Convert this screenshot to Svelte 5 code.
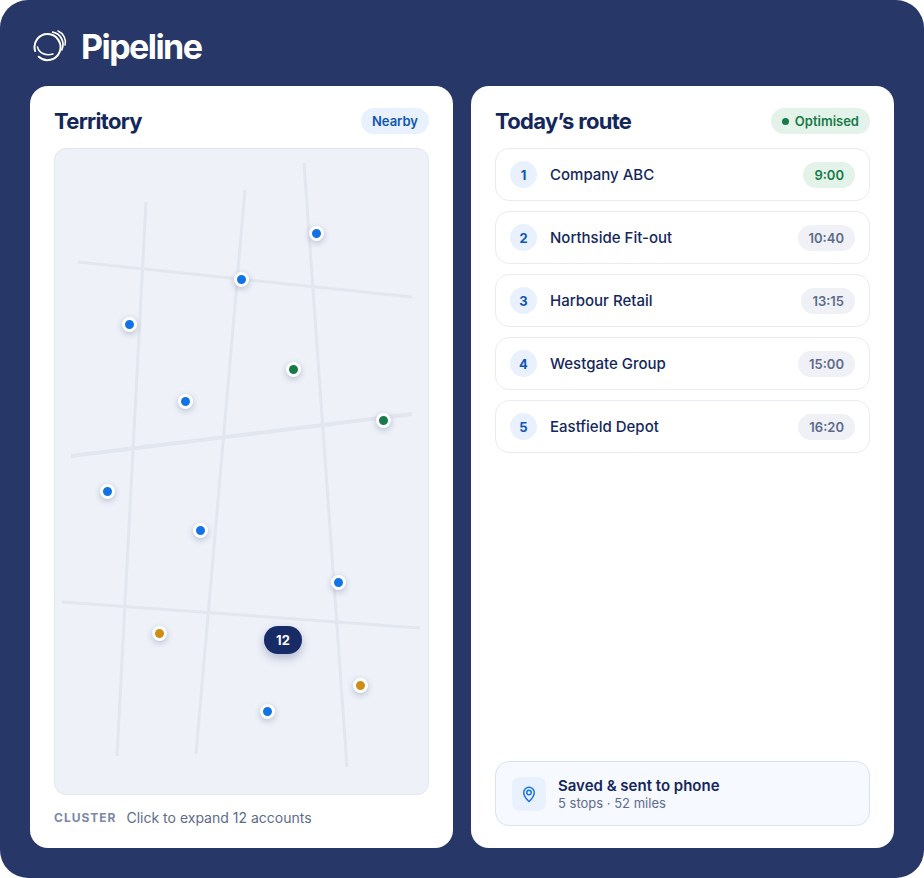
<script>
  const roads = [
    [146, 202, 117, 756, 3], [245, 190, 196, 754, 3], [304, 163, 347, 767, 3],
    [78, 262, 412, 297, 3], [71, 456, 412, 414, 4], [62, 602, 420, 628, 3]
  ];
  const pins = [
    [316, 233, 'blue'], [241, 279, 'blue'], [129, 324, 'blue'], [185, 401, 'blue'],
    [107, 491, 'blue'], [200, 530, 'blue'], [338, 582, 'blue'], [267, 711, 'blue'],
    [293, 369, 'green'], [383, 420, 'green'], [159, 633, 'amber'], [360, 685, 'amber']
  ];
  const stops = [
    ['Company ABC', '9:00', true], ['Northside Fit-out', '10:40'], ['Harbour Retail', '13:15'],
    ['Westgate Group', '15:00'], ['Eastfield Depot', '16:20']
  ];
</script>

<div class="frame">
  <header class="brand">
    <svg class="logo" width="34" height="34" viewBox="0 0 34 34" fill="none" stroke="#fff" stroke-linecap="round">
      <path d="M25 3A12 12 0 0 1 32 17" stroke-width="1.500" />
      <path d="M19.700 4.200A12.500 12.500 0 0 1 28.800 21.800" stroke-width="1.700" />
      <path d="M1.700 21.300A13 13 0 1 1 4.500 27.400" stroke-width="2" transform="rotate(-8 14.500 19)" />
      <path d="M4.500 19C6 25 12 28 20 26" stroke-width="1.500" />
    </svg>
    <span class="wordmark">Pipeline</span>
  </header>

  <main class="cards">
    <section class="card">
      <div class="card-head">
        <h2>Territory</h2>
        <span class="pill nearby">Nearby</span>
      </div>
      <div class="map">
        <svg class="roads" width="375" height="647" viewBox="54 148 375 647">
          {#each roads as [x1, y1, x2, y2, w]}
            <line {x1} {y1} {x2} {y2} stroke="#e2e6ee" stroke-width={w} />
          {/each}
        </svg>
        {#each pins as [x, y, c]}
          <span class="pin {c}" style="left:{x - 54}px;top:{y - 148}px"></span>
        {/each}
        <span class="cluster">12</span>
      </div>
      <div class="legend">
        <span class="legend-key">CLUSTER</span>
        <span class="legend-text">Click to expand 12 accounts</span>
      </div>
    </section>

    <section class="card">
      <div class="card-head">
        <h2>Today’s route</h2>
        <span class="pill optimised"><i class="dot"></i>Optimised</span>
      </div>
      <ul class="stops">
        {#each stops as [name, time, first], i}
          <li class="stop">
            <span class="num">{i + 1}</span>
            <span class="name">{name}</span>
            <span class="time" class:first>{time}</span>
          </li>
        {/each}
      </ul>
      <div class="saved">
        <span class="saved-icon">
          <svg width="18" height="18" viewBox="0 0 24 24" fill="none" stroke="#1a73e8" stroke-width="2" stroke-linejoin="round">
            <path d="M12 22C12 22 5 15.500 5 10a7 7 0 0 1 14 0C19 15.500 12 22 12 22Z" />
            <circle cx="12" cy="10" r="3" />
          </svg>
        </span>
        <div>
          <div class="saved-title">Saved &amp; sent to phone</div>
          <div class="saved-sub">5 stops · 52 miles</div>
        </div>
      </div>
    </section>
  </main>
</div>

<style>
  :global(body) { margin: 0; background: #fff; }
  * { box-sizing: border-box; }
  .frame {
    width: 924px; height: 878px; background: #273767; border-radius: 28px;
    padding: 0 30px 30px; display: flex; flex-direction: column;
    font-family: Inter, "Liberation Sans", sans-serif; color: #14275a;
  }
  .brand { height: 86px; display: flex; align-items: center; gap: 14px; padding: 7px 0 0 3px; flex: none; }
  .logo { flex: none; margin-top: -3px; }
  .wordmark { color: #fff; font-size: 34px; font-weight: 700; letter-spacing: -1.550px; line-height: 40px; }
  .cards { flex: 1; display: grid; grid-template-columns: 423px 423px; gap: 18px; min-height: 0; }
  .card { background: #fff; border-radius: 18px; padding: 22px 24px 20px; display: flex; flex-direction: column; }
  .card-head { display: flex; justify-content: space-between; align-items: center; height: 26px; margin-bottom: 14px; flex: none; }
  h2 { margin: 0; font-size: 22px; font-weight: 700; letter-spacing: -0.700px; color: #14275a; line-height: 26px; }
  .pill { height: 26px; border-radius: 13px; font-size: 13px; font-weight: 600; display: inline-flex; align-items: center; padding: 0 11px; }
  .nearby { background: #e8f1fd; color: #0f57b0; }
  .optimised { background: #e3f3ea; color: #177a48; }
  .dot { width: 7px; height: 7px; border-radius: 50%; background: #177a48; margin-right: 6px; }
  .map { position: relative; height: 647px; background: #eef1f8; border: 1px solid #e3e6ef; border-radius: 12px; overflow: hidden; flex: none; }
  .roads { position: absolute; left: -1px; top: -1px; }
  .pin {
    position: absolute; width: 15px; height: 15px; margin: -8px 0 0 -8px; border-radius: 50%;
    border: 3px solid #fff; box-shadow: 0 2px 6px rgba(20, 39, 90, .25);
  }
  .blue { background: #1273e6; }
  .green { background: #177a48; }
  .amber { background: #cf8d14; }
  .cluster {
    position: absolute; left: 209px; top: 477px; width: 38px; height: 28px; border-radius: 14px;
    background: #172b66; color: #fff; font-size: 13px; font-weight: 700; display: flex; align-items: center; justify-content: center;
    box-shadow: 0 4px 10px rgba(20, 39, 90, .28);
  }
  .legend { display: flex; align-items: center; gap: 10px; margin-top: 13px; height: 18px; }
  .legend-key { font-size: 12px; font-weight: 700; letter-spacing: 1px; color: #7c88a6; }
  .legend-text { font-size: 14px; color: #5d6b8c; }
  .stops { list-style: none; margin: 0; padding: 0; display: flex; flex-direction: column; gap: 10px; flex: 1; }
  .stop { height: 53px; border: 1px solid #e8ebf3; border-radius: 14px; display: flex; align-items: center; padding: 0 14px; }
  .num { width: 27px; height: 27px; border-radius: 50%; background: #e8f1fd; color: #0f57b0; font-size: 13px; font-weight: 700; display: flex; align-items: center; justify-content: center; margin-right: 13px; }
  .name { font-size: 15px; font-weight: 500; color: #14275a; flex: 1; }
  .time { height: 26px; border-radius: 13px; background: #eff1f6; color: #5d6b8c; font-size: 13px; font-weight: 600; padding: 0 11px; display: flex; align-items: center; }
  .time.first { background: #e3f3ea; color: #177a48; }
  .saved { height: 65px; background: #f6f9ff; border: 1px solid #d5e3f6; border-radius: 14px; display: flex; align-items: center; gap: 12px; padding: 0 16px; flex: none; margin-bottom: 2px; }
  .saved-icon { width: 34px; height: 34px; border-radius: 8px; background: #e8f1fd; display: flex; align-items: center; justify-content: center; flex: none; }
  .saved-title { font-size: 15px; font-weight: 600; color: #14275a; line-height: 18px; }
  .saved-sub { font-size: 13px; color: #5d6b8c; line-height: 16px; }
</style>
